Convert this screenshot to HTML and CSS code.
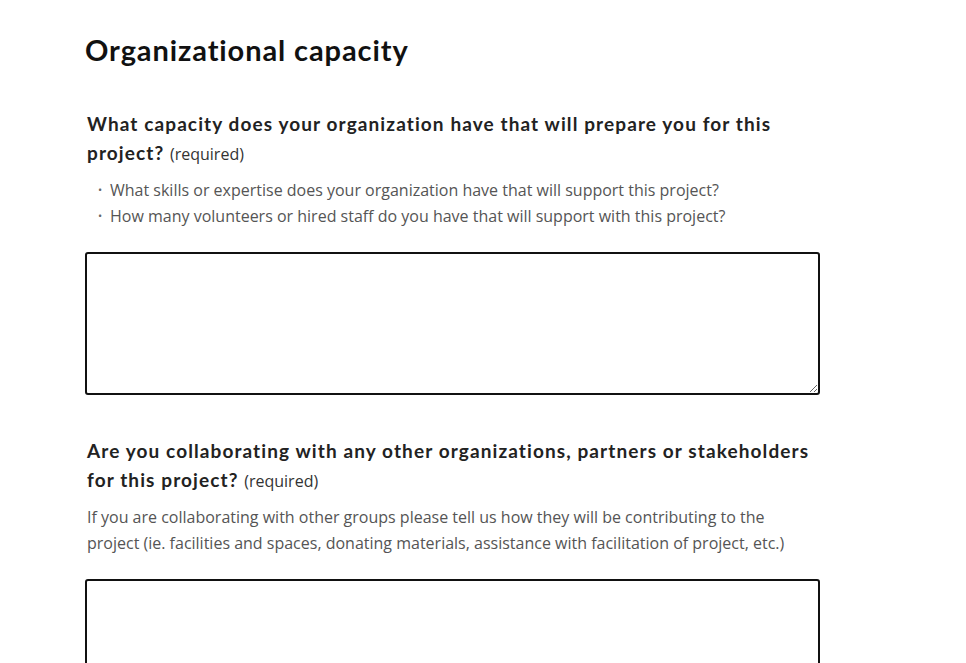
FILE: index.html
```html
<!DOCTYPE html>
<html lang="en">
<head>
<meta charset="utf-8">
<title>Organizational capacity</title>
<link rel="stylesheet" href="styles.css">
</head>
<body>
<main class="page">
  <h1 class="title">Organizational capacity</h1>

  <section class="field">
    <label class="label" for="q1">What capacity does your organization have that will prepare you for this project? <span class="req">(required)</span></label>
    <ul class="hints">
      <li>What skills or expertise does your organization have that will support this project?</li>
      <li>How many volunteers or hired staff do you have that will support with this project?</li>
    </ul>
    <textarea id="q1" class="area"></textarea>
  </section>

  <section class="field">
    <label class="label" for="q2">Are you collaborating with any other organizations, partners or stakeholders for this project? <span class="req">(required)</span></label>
    <p class="desc">If you are collaborating with other groups please tell us how they will be contributing to the project (ie. facilities and spaces, donating materials, assistance with facilitation of project, etc.)</p>
    <textarea id="q2" class="area"></textarea>
  </section>
</main>
</body>
</html>
```

FILE: styles.css
```css
html, body {
  margin: 0;
  padding: 0;
  background: #fff;
}
body {
  overflow: hidden;
  height: 663px;
}
.page {
  padding: 32px 0 0 85px;
  width: 735px;
}
.title {
  margin: 0 0 41px 0;
  font-family: "Lato", "Liberation Sans", sans-serif;
  font-weight: 700;
  font-size: 29px;
  line-height: 36px;
  color: #111;
  letter-spacing: 0.9px;
}
.field {
  margin: 0 0 41px 0;
  display: flex;
  flex-direction: column;
}
.label {
  display: block;
  padding-left: 2px;
  font-family: "Lato", "Liberation Sans", sans-serif;
  font-weight: 700;
  font-size: 19px;
  line-height: 29px;
  color: #222;
  letter-spacing: 1.1px;
}
.req {
  font-family: "Open Sans", sans-serif;
  font-weight: 400;
  font-size: 16px;
  line-height: 22px;
  letter-spacing: 0;
  color: #333;
}
.hints {
  margin: 10px 0 23px 0;
  padding: 0 0 0 25px;
  list-style: none;
  font-family: "Open Sans", sans-serif;
  font-size: 16px;
  line-height: 26px;
  color: #555;
}
.hints li {
  position: relative;
}
.hints li::before {
  content: "•";
  position: absolute;
  left: -12px;
  top: 0;
  font-size: 11px;
  color: #666;
}
.desc {
  margin: 10px 0 23px 2px;
  font-family: "Open Sans", sans-serif;
  font-size: 16px;
  line-height: 26px;
  color: #555;
  width: 700px;
}
.area {
  box-sizing: border-box;
  width: 735px;
  height: 143px;
  border: 2px solid #111;
  border-radius: 3px;
  margin: 0;
  padding: 8px;
  font-family: "Open Sans", sans-serif;
  font-size: 16px;
  resize: vertical;
}
```
